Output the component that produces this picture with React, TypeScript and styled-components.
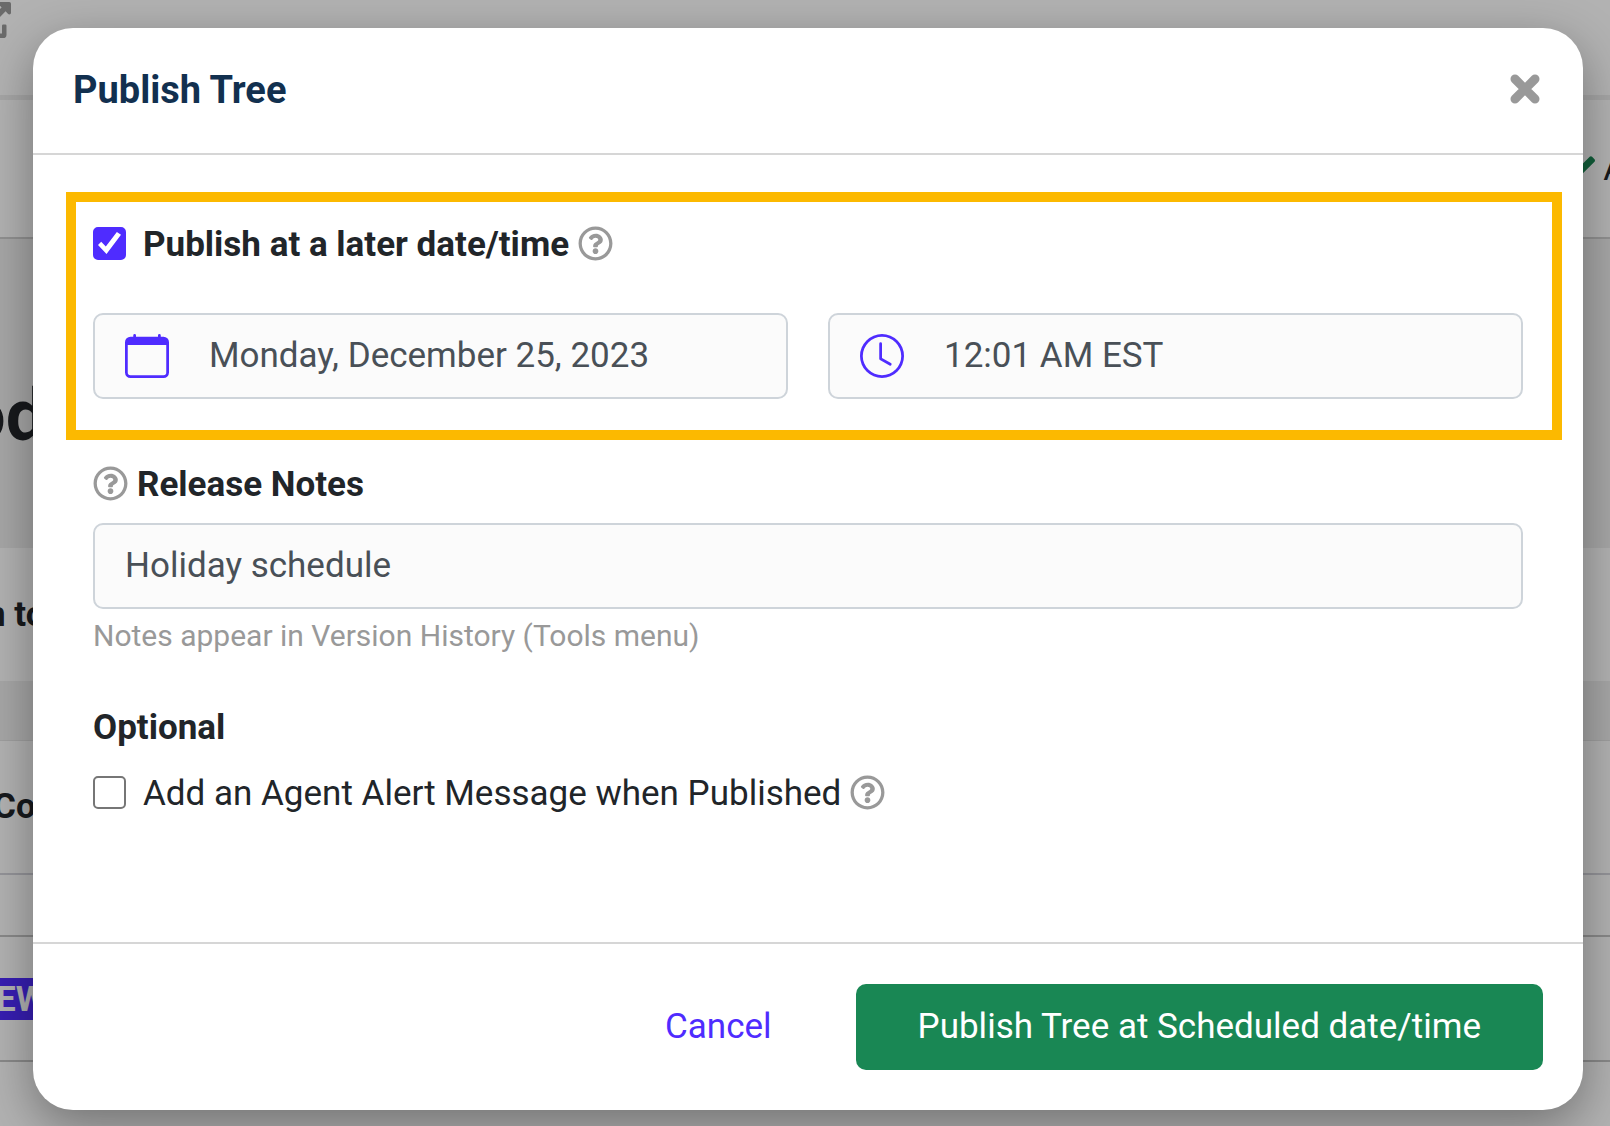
import React, { useState } from 'react';
import styled, { createGlobalStyle } from 'styled-components';
import { BsCalendar, BsClock } from 'react-icons/bs';
import { FaRegQuestionCircle, FaCheck, FaExternalLinkAlt } from 'react-icons/fa';

const GlobalStyle = createGlobalStyle`
  *, *::before, *::after { box-sizing: border-box; }
  body {
    margin: 0;
    font-family: Roboto, "Liberation Sans", sans-serif;
    font-size: 35px;
    line-height: 52px;
    color: #212529;
  }
  button, input { font: inherit; }
`;

const Screen = styled.div`
  position: relative;
  min-height: 100vh;
  display: flex;
  flex-direction: column;
  overflow: hidden;
  background: #fff;
`;

const Page = styled.div`
  flex: 1;
  display: flex;
  flex-direction: column;
`;

const Band = styled.div<{ $h: number; $bg?: string; $line?: string; $lineWidth?: number; $shift?: number }>`
  display: flex;
  align-items: center;
  justify-content: space-between;
  height: ${p => p.$h}px;
  background: ${p => p.$bg || '#fff'};
  border-bottom: ${p => (p.$line ? `${p.$lineWidth || 2}px solid ${p.$line}` : 'none')};
  margin: 0 -16px 0 ${p => -(p.$shift || 0)}px;
  white-space: nowrap;
  font-weight: 700;
`;

const PageTitle = styled.span`
  font-size: 72px;
  line-height: 84px;
  padding-top: 44px;
`;

const LinkIcon = styled(FaExternalLinkAlt)`
  width: 36px;
  height: 36px;
  margin-bottom: 56px;
  color: #999;
`;

const Status = styled.span`
  display: flex;
  align-items: center;
  gap: 8px;
  margin-left: auto;
  font-weight: 400;

  svg { width: 34px; height: 34px; color: #198754; }
`;

const Tag = styled.span`
  padding: 2px 8px 0;
  line-height: 40px;
  color: #fff;
  background: #4f2cff;
`;

const Backdrop = styled.div`
  position: absolute;
  inset: 0;
  padding: 28px 27px 16px 33px;
  background: rgba(0, 0, 0, 0.3);
`;

const Dialog = styled.section`
  display: flex;
  flex-direction: column;
  border-radius: 40px;
  background: #fff;
  box-shadow: 0 16px 50px rgba(0, 0, 0, 0.36);
`;

const Header = styled.header`
  display: flex;
  align-items: center;
  justify-content: space-between;
  padding: 36px 40px 37px;
  border-bottom: 2px solid #d6d6d6;
`;

const Title = styled.h1`
  margin: 0;
  font-size: 38px;
  line-height: 52px;
  font-weight: 700;
  color: #12304f;
`;

const CloseButton = styled.button`
  display: flex;
  padding: 0;
  border: 0;
  background: none;
  color: #999;
  cursor: pointer;

  svg { width: 36px; height: 36px; }
`;

const Body = styled.div`
  display: flex;
  flex-direction: column;
  padding: 37px 60px 122px;
`;

const Highlight = styled.div`
  display: flex;
  flex-direction: column;
  gap: 42px;
  margin: 0 -39px 0 -27px;
  padding: 17px 29px 31px 17px;
  border: 10px solid #fcb900;
`;

const Row = styled.div`
  display: flex;
  align-items: center;
  gap: 9px;
`;

const Check = styled.label<{ $bold?: boolean }>`
  display: flex;
  align-items: center;
  gap: 17px;
  font-weight: ${p => (p.$bold ? 700 : 400)};
`;

const Tick = styled.input.attrs({ type: 'checkbox' })`
  appearance: none;
  display: grid;
  place-items: center;
  width: 33px;
  height: 33px;
  margin: 0 0 4px;
  border: 2px solid #767676;
  border-radius: 5px;
  background: #fff;

  &:checked { border-color: #4f2cff; background: #4f2cff; }

  &:checked::before {
    content: '';
    width: 23px;
    height: 22px;
    background: #fff;
    clip-path: polygon(0 59%, 14% 44%, 34% 66%, 82% 0, 100% 12%, 37% 100%);
  }
`;

const HelpButton = styled.button`
  display: flex;
  margin-bottom: 4px;
  padding: 0;
  border: 0;
  background: none;
  color: #999;
  cursor: pointer;

  svg { width: 35px; height: 35px; }
`;

const Fields = styled.div`
  display: grid;
  grid-template-columns: 1fr 1fr;
  gap: 40px;
`;

const Field = styled.label`
  display: flex;
  align-items: center;
  gap: 40px;
  height: 86px;
  padding: 0 30px;
  border: 2px solid #ced4da;
  border-radius: 10px;
  background: #fbfbfb;

  svg { flex: none; width: 44px; height: 44px; color: #4f2cff; }
`;

const TextInput = styled.input.attrs({ type: 'text' })`
  flex: 1;
  min-width: 0;
  padding: 0;
  border: 0;
  outline: 0;
  background: none;
  color: #495057;
`;

const NotesHead = styled(Row)`
  margin: 19px 0 12px;
  font-weight: 700;
`;

const Hint = styled.p`
  margin: 4px 0 44px;
  font-size: 30px;
  line-height: 45px;
  color: #999;
`;

const Subhead = styled.h2`
  margin: 0 0 14px;
  font-size: 35px;
  line-height: 52px;
  font-weight: 700;
`;

const Footer = styled.footer`
  display: flex;
  justify-content: flex-end;
  gap: 22px;
  padding: 40px;
  border-top: 2px solid #d6d6d6;
`;

const Button = styled.button<{ $primary?: boolean }>`
  height: 86px;
  padding: 0 62px;
  border: 0;
  border-radius: 10px;
  color: ${p => (p.$primary ? '#fff' : '#4f2cff')};
  background: ${p => (p.$primary ? '#198754' : 'none')};
  cursor: pointer;
`;

function Help({ label }: { label: string }) {
  return (
    <HelpButton type="button" aria-label={label}>
      <FaRegQuestionCircle />
    </HelpButton>
  );
}

function CloseIcon() {
  return (
    <svg viewBox="0 0 36 36" fill="none" stroke="currentColor" strokeWidth="9" strokeLinecap="round">
      <path d="M8 7L28 27M28 7L8 27" />
    </svg>
  );
}

export default function App() {
  const [later, setLater] = useState(true);
  const [alert, setAlert] = useState(false);
  const [date, setDate] = useState('Monday, December 25, 2023');
  const [time, setTime] = useState('12:01 AM EST');
  const [notes, setNotes] = useState('Holiday schedule');

  return (
    <Screen>
      <GlobalStyle />
      <Page aria-hidden="true">
        <Band $h={100} $line="#eeeeee" $lineWidth={5} $shift={25}><LinkIcon /></Band>
        <Band $h={139} $line="#d0d0d0"><Status><FaCheck />A</Status></Band>
        <Band $h={309} $bg="#efefef" $shift={35}><PageTitle>od</PageTitle></Band>
        <Band $h={133} $shift={14}>n to</Band>
        <Band $h={60} $bg="#efefef" $line="#e4e4e4" $lineWidth={1} />
        <Band $h={134} $line="#d4d4dc" $shift={7}>Co</Band>
        <Band $h={62} $line="#c4c4c4" />
        <Band $h={125} $line="#c4c4c4" $shift={12}><Tag>EW</Tag></Band>
      </Page>
      <Backdrop>
        <Dialog role="dialog" aria-modal="true" aria-labelledby="dialog-title">
          <Header>
            <Title id="dialog-title">Publish Tree</Title>
            <CloseButton type="button" aria-label="Close"><CloseIcon /></CloseButton>
          </Header>
          <Body>
            <Highlight>
              <Row>
                <Check $bold>
                  <Tick checked={later} onChange={e => setLater(e.target.checked)} />
                  Publish at a later date/time
                </Check>
                <Help label="About scheduled publishing" />
              </Row>
              <Fields>
                <Field>
                  <BsCalendar />
                  <TextInput aria-label="Date" value={date} onChange={e => setDate(e.target.value)} />
                </Field>
                <Field>
                  <BsClock />
                  <TextInput aria-label="Time" value={time} onChange={e => setTime(e.target.value)} />
                </Field>
              </Fields>
            </Highlight>
            <NotesHead>
              <Help label="About release notes" />
              <label htmlFor="notes">Release Notes</label>
            </NotesHead>
            <Field as="div">
              <TextInput id="notes" value={notes} onChange={e => setNotes(e.target.value)} />
            </Field>
            <Hint>Notes appear in Version History (Tools menu)</Hint>
            <Subhead>Optional</Subhead>
            <Row>
              <Check>
                <Tick checked={alert} onChange={e => setAlert(e.target.checked)} />
                Add an Agent Alert Message when Published
              </Check>
              <Help label="About agent alert messages" />
            </Row>
          </Body>
          <Footer>
            <Button type="button">Cancel</Button>
            <Button type="button" $primary>Publish Tree at Scheduled date/time</Button>
          </Footer>
        </Dialog>
      </Backdrop>
    </Screen>
  );
}
